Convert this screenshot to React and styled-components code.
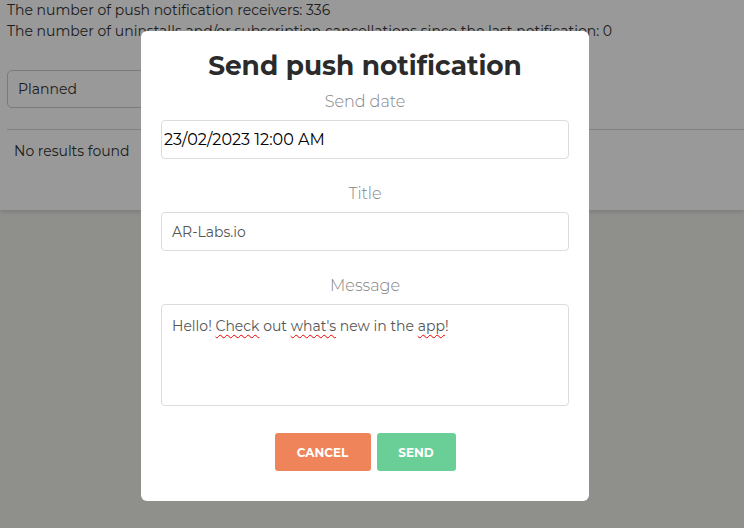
import React from "react";
import styled, { createGlobalStyle } from "styled-components";

const FONT = `"Montserrat", "Inter", "DejaVu Sans", sans-serif`;

const GlobalStyle = createGlobalStyle`
  html, body { margin: 0; padding: 0; }
  body {
    background: #eeeeea;
    font-family: ${FONT};
    color: #333;
    height: 528px;
    overflow: hidden;
  }
`;

const Card = styled.section`
  background: #fff;
  height: 210px;
  box-sizing: border-box;
  padding: 0 0 0 7px;
  box-shadow: 0 2px 4px rgba(0, 0, 0, 0.12);
`;

const Stat = styled.p`
  margin: 0;
  font-size: 14px;
  line-height: 21px;
  color: #333;
`;

const SelectBox = styled.div`
  margin-top: 28px;
  width: 300px;
  height: 38px;
  box-sizing: border-box;
  border: 1px solid #ccc;
  border-radius: 5px;
  display: flex;
  align-items: center;
  padding-left: 10px;
  font-size: 14px;
  color: #333;
`;

const Divider = styled.hr`
  margin: 21px 0 0;
  border: none;
  border-top: 1px solid #d6d6d6;
`;

const Empty = styled.div`
  padding: 11px 0 0 7px;
  font-size: 14px;
  line-height: 20px;
  color: #333;
`;

const Overlay = styled.div`
  position: fixed;
  inset: 0;
  background: rgba(0, 0, 0, 0.4);
  display: flex;
  justify-content: center;
  align-items: flex-start;
  padding: 31px 14px 0 0;
`;

const Modal = styled.div`
  width: 448px;
  box-sizing: border-box;
  background: #fff;
  border-radius: 6px;
  padding: 18px 20px 30px;
  display: flex;
  flex-direction: column;
`;

const Title = styled.h2`
  margin: 0;
  text-align: center;
  font-size: 26.4px;
  line-height: 34px;
  font-weight: 700;
  color: #2b2b2b;
`;

const Label = styled.label`
  display: block;
  text-align: center;
  font-size: 16px;
  line-height: 20px;
  font-weight: 300;
  color: #858585;
  margin-top: ${(p) => p.$top}px;
  margin-bottom: 8px;
`;

const Input = styled.div`
  height: 39px;
  box-sizing: border-box;
  border: 1px solid #dcdcdc;
  border-radius: 4px;
  display: flex;
  align-items: center;
  padding-left: ${(p) => (p.$native ? 2 : 10)}px;
  font-size: ${(p) => (p.$native ? 16 : 14)}px;
  color: ${(p) => (p.$native ? "#000" : "#555")};
`;

const TextArea = styled.div`
  height: 102px;
  box-sizing: border-box;
  border: 1px solid #dcdcdc;
  border-radius: 4px;
  padding: 11px 10px;
  font-size: 14px;
  line-height: 20px;
  color: #555;
`;

const Spell = styled.span`
  text-decoration: underline wavy #e00;
  text-decoration-thickness: 1px;
  text-underline-offset: 3px;
`;

const Actions = styled.div`
  margin-top: 27px;
  display: flex;
  justify-content: center;
  gap: 6px;
`;

const Button = styled.button`
  width: ${(p) => p.$w}px;
  height: 38px;
  border: none;
  border-radius: 3px;
  background: ${(p) => p.$bg};
  color: #fff;
  font-family: ${FONT};
  font-weight: 700;
  font-size: 12px;
  text-transform: uppercase;
  cursor: pointer;
`;

export default function App() {
  return (
    <>
      <GlobalStyle />
      <Card>
        <Stat>The number of push notification receivers: 336</Stat>
        <Stat>
          The number of uninstalls and/or subscription cancellations since the
          last notification: 0
        </Stat>
        <SelectBox>Planned</SelectBox>
        <Divider />
        <Empty>No results found</Empty>
      </Card>
      <Overlay>
        <Modal>
          <Title>Send push notification</Title>
          <Label $top={9}>Send date</Label>
          <Input $native>23/02/2023 12:00 AM</Input>
          <Label $top={25}>Title</Label>
          <Input>AR-Labs.io</Input>
          <Label $top={25}>Message</Label>
          <TextArea>
            Hello! <Spell>Check</Spell> out <Spell>what's</Spell> new in the{" "}
            <Spell>app</Spell>!
          </TextArea>
          <Actions>
            <Button $w={96} $bg="#ef8359">Cancel</Button>
            <Button $w={79} $bg="#6acf97">Send</Button>
          </Actions>
        </Modal>
      </Overlay>
    </>
  );
}
